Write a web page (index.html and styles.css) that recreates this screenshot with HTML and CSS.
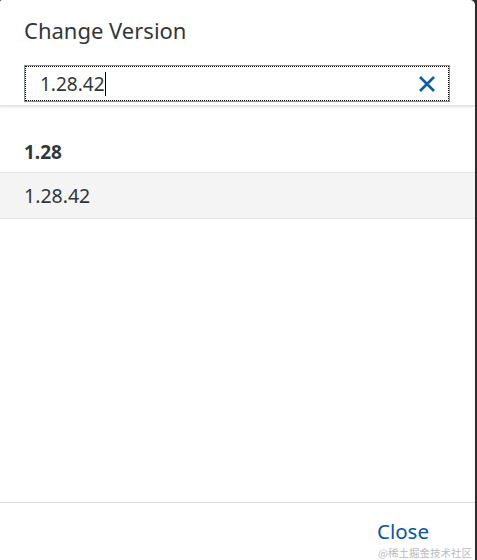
FILE: index.html
```html
<!DOCTYPE html>
<html>
<head>
<meta charset="utf-8">
<link rel="stylesheet" href="styles.css">
</head>
<body>
<div class="dialog">
  <header class="head">
    <h1 class="title">Change Version</h1>
    <div class="search">
      <span class="value">1.28.42</span><span class="caret"></span>
      <svg class="clear" width="18" height="18" viewBox="0 0 18 18"><path d="M2 2 L16 16 M16 2 L2 16" stroke="#0a5ea8" stroke-width="2.6" stroke-linecap="butt" fill="none"/></svg>
    </div>
  </header>
  <div class="content">
    <div class="group">1.28</div>
    <div class="item">1.28.42</div>
  </div>
  <footer class="foot">
    <span class="close">Close</span>
    <span class="mark">@稀土掘金技术社区</span>
  </footer>
</div>
</body>
</html>
```
FILE: styles.css
```css
html, body { margin: 0; padding: 0; }
body {
  background: #2a2c2e;
  width: 477px;
  height: 560px;
  overflow: hidden;
  font-family: "Noto Sans", "Liberation Sans", "Noto Sans CJK SC", sans-serif;
  color: #32363a;
}
.dialog {
  width: 475px;
  height: 560px;
  background: #fff;
  border-radius: 2px 5px 0 0;
  display: flex;
  flex-direction: column;
}
.head {
  height: 106px;
  box-sizing: border-box;
  padding: 0 25px 0 24px;
  box-shadow: 0 1px 2px rgba(0,0,0,0.12);
  border-bottom: 1px solid #e6e6e6;
  position: relative;
  z-index: 1;
}
.title {
  margin: 0;
  padding-top: 13px;
  height: 65px;
  box-sizing: border-box;
  font-size: 22px;
  font-weight: 400;
  line-height: 34px;
  color: #32363a;
}
.search {
  height: 37px;
  box-sizing: border-box;
  border: 1px solid #89919a;
  outline: 1px dotted #000;
  outline-offset: -2px;
  display: flex;
  align-items: center;
  padding: 0 13px 0 15px;
}
.value { font-size: 19px; line-height: 24px; color: #32363a; }
.caret { width: 1px; height: 24px; background: #000; margin-left: 0; }
.clear { margin-left: auto; }
.content { flex: 1; padding-top: 28px; }
.group {
  height: 38px;
  padding-left: 24px;
  font-weight: 700;
  font-size: 19px;
  line-height: 36px;
  border-bottom: 1px solid #e5e5e5;
}
.item {
  height: 45px;
  padding-left: 24px;
  font-size: 19.5px;
  line-height: 45px;
  background: #f4f4f4;
  border-bottom: 1px solid #e5e5e5;
}
.foot {
  height: 57px;
  border-top: 1px solid #d9d9d9;
  position: relative;
  display: flex;
  justify-content: flex-end;
  align-items: flex-start;
  padding-right: 46px;
}
.close {
  margin-top: 19px;
  font-size: 20.5px;
  line-height: 18px;
  color: #0854a0;
}
.mark {
  position: absolute;
  right: 3px;
  bottom: 2px;
  font-size: 10.5px;
  line-height: 10px;
  color: #b9bcc0;
  font-family: "Noto Sans CJK SC", sans-serif;
}
```
